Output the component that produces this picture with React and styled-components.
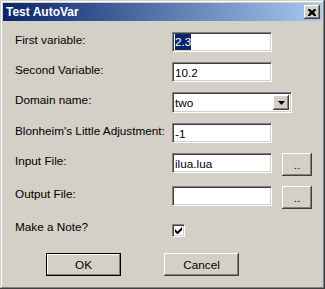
import React from 'react'
import styled, { createGlobalStyle } from 'styled-components'

const GlobalStyle = createGlobalStyle`
   body {
      margin: 0;
      font-family: "Liberation Sans", Arial, sans-serif;
      background: #d4d0c8;
   }
`

const rows = [
   { label: 'First variable:', value: '2.3', selected: true },
   { label: 'Second Variable:', value: '10.2' },
   { label: 'Domain name:', value: 'two', combo: true },
   { label: "Blonheim's Little Adjustment:", value: '-1' },
   { label: 'Input File:', value: 'ilua.lua', browse: true },
   { label: 'Output File:', value: '', browse: true },
]

const App = () => {
   return (
      <>
         <GlobalStyle />
         <StyledWindow>
            <StyledTitleBar>
               <StyledTitle>Test AutoVar</StyledTitle>
               <StyledClose>
                  <svg width="8" height="7" viewBox="0 0 8 7">
                     <path d="M0 0h2l2 2 2-2h2v1L6 3.5 8 6v1H6L4 5 2 7H0V6l2-2.5L0 1z" fill="#000" />
                  </svg>
               </StyledClose>
            </StyledTitleBar>
            <StyledForm>
               {rows.map((r) => (
                  <StyledRow key={r.label}>
                     <StyledLabel>{r.label}</StyledLabel>
                     {r.combo ? (
                        <StyledCombo>
                           <StyledComboText>{r.value}</StyledComboText>
                           <StyledArrow>
                              <svg width="7" height="4" viewBox="0 0 7 4">
                                 <path d="M0 0h7L3.5 4z" fill="#000" />
                              </svg>
                           </StyledArrow>
                        </StyledCombo>
                     ) : (
                        <StyledEdit>
                           {r.selected ? <StyledSelection>{r.value}</StyledSelection> : r.value}
                        </StyledEdit>
                     )}
                     {r.browse && <StyledBrowse>..</StyledBrowse>}
                  </StyledRow>
               ))}
               <StyledRow>
                  <StyledLabel>Make a Note?</StyledLabel>
                  <StyledCheck>
                     <svg width="7" height="7" viewBox="0 0 7 7">
                        <path d="M0 2v3l2 2h1l4-4V0L2.5 4.5z" fill="#000" />
                     </svg>
                  </StyledCheck>
               </StyledRow>
               <StyledButtons>
                  <StyledButton $default>OK</StyledButton>
                  <StyledButton>Cancel</StyledButton>
               </StyledButtons>
            </StyledForm>
         </StyledWindow>
      </>
   )
}

export default App

const StyledWindow = styled.div`
   box-sizing: border-box;
   width: 325px;
   height: 289px;
   padding: 3px;
   background: #d4d0c8;
   box-shadow: inset -1px -1px #404040, inset 1px 1px #d4d0c8,
      inset -2px -2px #808080, inset 2px 2px #ffffff;
`

const StyledTitleBar = styled.div`
   height: 18px;
   display: flex;
   align-items: center;
   justify-content: space-between;
   padding: 0 2px 0 3px;
   background: linear-gradient(to right, #0a246a, #a6caf0);
`

const StyledTitle = styled.span`
   color: #fff;
   font-weight: bold;
   font-size: 12px;
   line-height: 18px;
`

const StyledClose = styled.div`
   box-sizing: border-box;
   width: 16px;
   height: 14px;
   display: flex;
   align-items: center;
   justify-content: center;
   background: #d4d0c8;
   box-shadow: inset -1px -1px #404040, inset 1px 1px #ffffff,
      inset -2px -2px #808080;
`

const StyledForm = styled.div`
   display: flex;
   flex-direction: column;
   gap: 10px;
   padding: 11px 0 0 12px;
`

const StyledRow = styled.div`
   display: flex;
   align-items: flex-start;
`

const StyledLabel = styled.div`
   width: 157px;
   flex: none;
   margin-top: 1px;
   font-size: 11.75px;
   line-height: 14px;
   color: #000;
`

const sunken = `
   box-sizing: border-box;
   background: #fff;
   border-style: solid;
   border-width: 1px;
   border-color: #808080 #ffffff #ffffff #808080;
   box-shadow: inset 1px 1px #404040, inset -1px -1px #d4d0c8;
`

const StyledEdit = styled.div`
   ${sunken}
   width: 100px;
   height: 20px;
   padding: 0 2px;
   display: flex;
   align-items: center;
   font-size: 11.75px;
   color: #000;
`

const StyledSelection = styled.span`
   background: #0a246a;
   color: #fff;
   line-height: 16px;
`

const StyledCombo = styled.div`
   ${sunken}
   width: 120px;
   height: 21px;
   padding: 2px;
   display: flex;
   align-items: stretch;
   justify-content: space-between;
   font-size: 11.75px;
`

const StyledComboText = styled.span`
   display: flex;
   align-items: center;
`

const StyledArrow = styled.div`
   box-sizing: border-box;
   width: 16px;
   display: flex;
   align-items: center;
   justify-content: center;
   background: #d4d0c8;
   box-shadow: inset -1px -1px #404040, inset 1px 1px #ffffff,
      inset -2px -2px #808080;
`

const raised = `
   box-sizing: border-box;
   background: #d4d0c8;
   display: flex;
   align-items: center;
   justify-content: center;
   font-family: "Liberation Sans", Arial, sans-serif;
   font-size: 11.75px;
   color: #000;
`

const StyledBrowse = styled.div`
   ${raised}
   width: 30px;
   height: 23px;
   margin-left: 10px;
   box-shadow: inset -1px -1px #404040, inset 1px 1px #ffffff,
      inset -2px -2px #808080;
`

const StyledCheck = styled.div`
   ${sunken}
   width: 13px;
   height: 13px;
   margin-top: 5px;
   display: flex;
   align-items: center;
   justify-content: center;
`

const StyledButtons = styled.div`
   display: flex;
   gap: 43px;
   margin-top: 6px;
   padding-left: 31px;
`

const StyledButton = styled.div`
   ${raised}
   width: 75px;
   height: 23px;
   border: ${(p) => (p.$default ? '1px solid #000' : 'none')};
   box-shadow: ${(p) =>
      p.$default
         ? 'inset -1px -1px #808080, inset 1px 1px #ffffff'
         : 'inset -1px -1px #404040, inset 1px 1px #ffffff, inset -2px -2px #808080'};
`
